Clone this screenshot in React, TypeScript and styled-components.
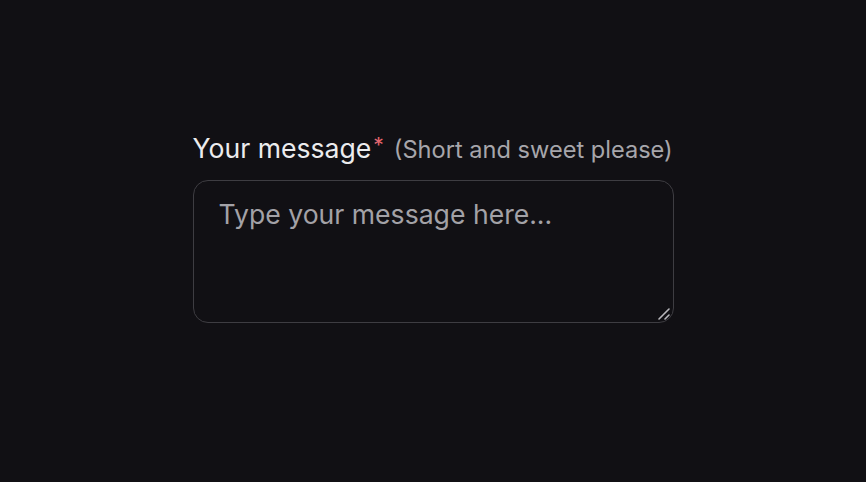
import React from 'react';
import styled, { createGlobalStyle } from 'styled-components';

const GlobalStyle = createGlobalStyle`
	html, body {
		margin: 0;
		padding: 0;
		background: #111014;
		color-scheme: dark;
	}
	body {
		font-family: Inter, "Noto Sans", sans-serif;
	}
`;

const Page = styled.div`
	width: 100vw;
	height: 100vh;
	display: flex;
	justify-content: center;
	padding-top: 128px;
	box-sizing: border-box;
`;

const Field = styled.div`
	display: flex;
	flex-direction: column;
	gap: 12px;
	width: 481px;
`;

const Label = styled.label`
	display: flex;
	align-items: baseline;
	gap: 10px;
	color: #ececee;
	font-size: 26.6px;
	line-height: 36px;
	white-space: nowrap;

	.required {
		color: #e5676f;
		font-size: 21px;
		margin-left: 2px;
		vertical-align: 5px;
	}
`;

const Hint = styled.span`
	color: #a7a6ab;
	font-size: 23.6px;
`;

const InputWrap = styled.div`
	position: relative;
	width: 481px;
	height: 143px;
`;

const TextArea = styled.textarea`
	display: block;
	box-sizing: border-box;
	width: 100%;
	height: 100%;
	padding: 16px 25px;
	background: #111014;
	border: 1.5px solid #3e3d42;
	border-radius: 15px;
	color: #ececee;
	font-family: Inter, "Noto Sans", sans-serif;
	font-size: 26.6px;
	line-height: 34px;
	outline: none;
	resize: none;

	&::placeholder {
		color: #a3a2a7;
	}
`;

const Grip = styled.svg`
	position: absolute;
	right: 3px;
	bottom: 3px;
	pointer-events: none;
`;

export default function App() {
	return (
		<>
			<GlobalStyle />
			<Page>
				<Field>
					<Label htmlFor={'message'}>
						<span>
							Your message<span className={'required'}>*</span>
						</span>
						<Hint>(Short and sweet please)</Hint>
					</Label>
					<InputWrap>
						<TextArea id={'message'} placeholder={'Type your message here...'} />
						<Grip width={14} height={14} viewBox={'0 0 14 14'}>
							<path d={'M2 13 L12 3 M8 13 L12 9'} stroke={'#b9b8bd'} strokeWidth={1.6} strokeLinecap={'round'} />
						</Grip>
					</InputWrap>
				</Field>
			</Page>
		</>
	);
}
